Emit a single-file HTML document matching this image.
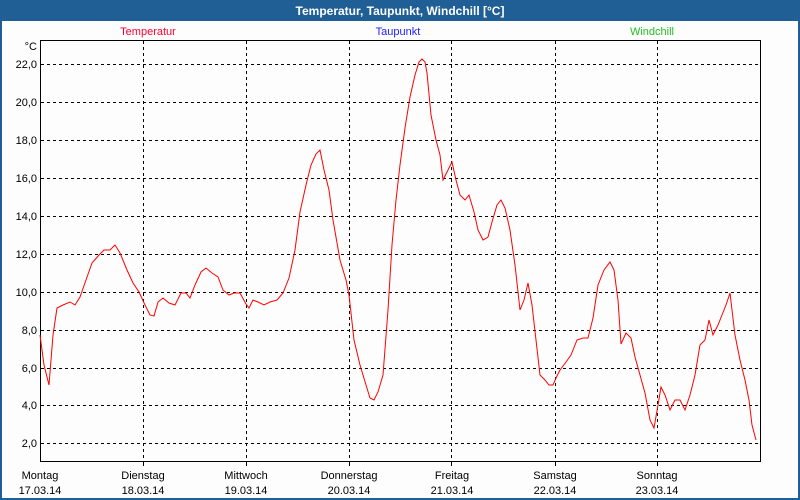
<!DOCTYPE html>
<html><head><meta charset="utf-8"><style>
body{margin:0;width:800px;height:500px;overflow:hidden;background:#fff;font-family:"Liberation Sans",sans-serif}
</style></head><body>
<svg width="800" height="500" xmlns="http://www.w3.org/2000/svg" style="display:block">
<rect x="0" y="0" width="800" height="500" fill="#1f5f96"/>
<rect x="2" y="21" width="796" height="477" fill="#fdfdfd"/>
<text x="400" y="15" fill="#fff" font-size="12" font-weight="bold" text-anchor="middle">Temperatur, Taupunkt, Windchill [°C]</text>
<g font-size="11" text-anchor="middle">
<text x="148" y="35" fill="#ff0030">Temperatur</text>
<text x="398" y="35" fill="#2020ff">Taupunkt</text>
<text x="652" y="35" fill="#20c020">Windchill</text>
</g>
<g stroke="#000" stroke-dasharray="3,3" stroke-width="1">
<path d="M143.5 41V461M246.5 41V461M349.5 41V461M451.5 41V461M555.5 41V461M657.5 41V461"/>
<path d="M41 64.5H760M41 102.5H760M41 140.5H760M41 178.5H760M41 216.5H760M41 254.5H760M41 292.5H760M41 330.5H760M41 368.5H760M41 405.5H760M41 443.5H760"/>
</g>
<path d="M143.5 461v5M246.5 461v5M349.5 461v5M451.5 461v5M555.5 461v5M657.5 461v5" stroke="#000"/>
<rect x="40.5" y="40.5" width="720" height="421" fill="none" stroke="#000"/>
<g font-size="11" text-anchor="end" fill="#000">
<text x="37" y="50">°C</text>
<text x="37" y="68">22,0</text><text x="37" y="106">20,0</text><text x="37" y="144">18,0</text>
<text x="37" y="182">16,0</text><text x="37" y="220">14,0</text><text x="37" y="258">12,0</text>
<text x="37" y="296">10,0</text><text x="37" y="334">8,0</text><text x="37" y="372">6,0</text>
<text x="37" y="409">4,0</text><text x="37" y="447">2,0</text>
</g>
<g font-size="11" text-anchor="middle" fill="#000">
<text x="40" y="479">Montag</text><text x="40" y="494">17.03.14</text>
<text x="143" y="479">Dienstag</text><text x="143" y="494">18.03.14</text>
<text x="246" y="479">Mittwoch</text><text x="246" y="494">19.03.14</text>
<text x="349" y="479">Donnerstag</text><text x="349" y="494">20.03.14</text>
<text x="452" y="479">Freitag</text><text x="452" y="494">21.03.14</text>
<text x="555" y="479">Samstag</text><text x="555" y="494">22.03.14</text>
<text x="657" y="479">Sonntag</text><text x="657" y="494">23.03.14</text>
</g>
<polyline fill="none" stroke="#ff0000" stroke-width="1" points="40,335 44,365 49,385 53,335 57,308 63,305 70,302 75,305 80,297 86,280 92,263 99,255 104,250 110,250 115,245 120,253 127,270 133,283 139,292 145,305 150,315 154,316 158,302 163,298 169,303 175,305 181,293 186,293 190,298 195,285 201,272 206,268 212,273 218,277 223,290 229,295 234,293 240,293 246,304 249,308 253,300 258,302 264,305 270,302 277,300 283,293 289,278 295,250 300,212 306,185 311,165 316,154 320,150 324,170 329,190 333,220 340,260 346,280 349,295 354,340 360,365 366,385 370,398 374,400 378,392 383,375 388,310 392,245 396,200 400,165 405,128 410,97 415,75 419,62 422,59 425,62 427,73 431,115 436,140 440,155 443,180 447,172 452,162 456,180 460,195 465,200 469,195 474,212 478,230 483,240 488,237 492,222 497,205 501,200 505,208 510,230 515,265 520,310 524,300 528,283 532,305 536,340 540,375 545,380 549,385 553,385 556,378 560,370 566,362 571,355 577,340 583,338 588,338 593,318 598,285 604,270 610,262 614,270 618,300 621,344 626,333 631,338 635,357 640,375 645,393 650,420 654,428 658,405 661,387 665,395 670,410 675,400 680,400 685,410 690,395 695,375 700,345 705,340 709,320 713,335 718,325 722,315 726,305 730,293 735,335 740,360 745,380 749,400 752,425 756,440"/>
</svg>
</body></html>
